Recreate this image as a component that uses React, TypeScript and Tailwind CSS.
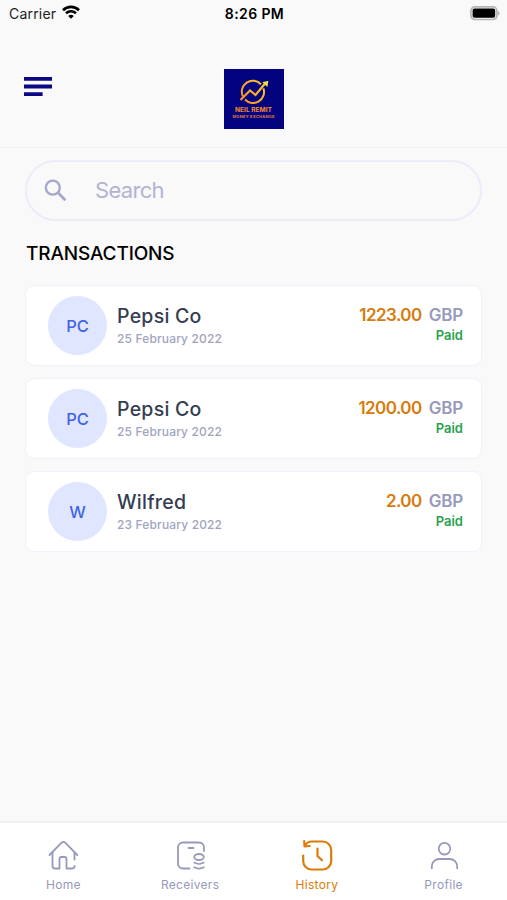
import type { ReactNode } from "react"

type Transaction = {
    id: number
    initials: string
    name: string
    date: string
    amount: string
}

const transactions: Transaction[] = [
    { id: 1, initials: "PC", name: "Pepsi Co", date: "25 February 2022", amount: "1223.00" },
    { id: 2, initials: "PC", name: "Pepsi Co", date: "25 February 2022", amount: "1200.00" },
    { id: 3, initials: "W", name: "Wilfred", date: "23 February 2022", amount: "2.00" },
]

function StatusBar() {
    return (
        <div className="grid h-7 grid-cols-3 items-center pr-[7px] pl-[9px] text-black">
            <div className="-mt-[2px] flex items-center gap-[6px]">
                <span className="text-[14px] tracking-[0.2px] text-[#222]">Carrier</span>
                <svg className="-mt-[2px]" width="18" height="14" viewBox="0 0 18 14" fill="none" stroke="currentColor" strokeWidth="2.6">
                    <path d="M1 5.2a11.4 11.4 0 0 1 16 0" />
                    <path d="M4 8.3a7.2 7.2 0 0 1 10 0" />
                    <path d="M9 13.8 6.2 11a4 4 0 0 1 5.6 0z" fill="currentColor" stroke="none" />
                </svg>
            </div>
            <span className="-mt-[2px] text-center text-[14px] font-semibold tracking-[0.4px]">8:26 PM</span>
            <svg className="-mt-[2px] justify-self-end" width="30" height="15" viewBox="0 0 30 15">
                <rect x="0.9" y="0.9" width="26" height="12.6" rx="4" fill="none" stroke="#b5b5b5" strokeWidth="1.7" />
                <rect x="2.6" y="2.6" width="22.6" height="9.2" rx="1.8" fill="#000" />
                <path d="M28.2 5v4.4c1.8-.8 1.8-3.6 0-4.4z" fill="#a5a5a5" />
            </svg>
        </div>
    )
}

function Logo() {
    return (
        <div className="flex h-[60px] w-[60px] flex-col items-center bg-[#03037f] pt-[9px]">
            <svg width="32" height="28" viewBox="0 0 32 28" fill="none">
                <defs>
                    <linearGradient id="gold" x1="0" y1="27" x2="32" y2="0" gradientUnits="userSpaceOnUse">
                        <stop offset="0" stopColor="#f58220" />
                        <stop offset="1" stopColor="#fdd835" />
                    </linearGradient>
                </defs>
                <path d="M4.9 18.5A11 11 0 0 1 23 6.4" stroke="url(#gold)" strokeWidth="2" />
                <path d="M25.4 10.3A11 11 0 0 1 7 21.5" stroke="url(#gold)" strokeWidth="2" />
                <path d="m2.5 22 9.5-9.5 5.5 4.5L27.500 5" stroke="url(#gold)" strokeWidth="2.2" />
                <path d="m24.3 4.3 6-1.6-.8 6.2z" fill="#e8e23c" />
            </svg>
            <span className="text-[6.6px] leading-[8px] font-bold whitespace-nowrap text-[#f28a30]">NEIL REMIT</span>
            <span className="text-[4px] leading-[5px] font-bold tracking-[0.25px] whitespace-nowrap text-[#e07a3a]">MONEY EXCHANGE</span>
        </div>
    )
}

function Header() {
    return (
        <header className="grid h-[120px] grid-cols-3 border-b border-[#f1f1f2] px-6 pt-[41px]">
            <button className="h-fit w-fit pt-2" aria-label="Menu">
                <svg width="28" height="20" viewBox="0 0 28 20" fill="#0c0784">
                    <path d="M0 0h28v3.8H0zM0 7.6h28v3.8H0zM0 15.2h18.6V19H0z" />
                </svg>
            </button>
            <div className="flex justify-center">
                <Logo />
            </div>
        </header>
    )
}

function SearchBar() {
    return (
        <div className="flex h-[61px] items-center rounded-full border-2 border-[#ebecfa] pl-[17px]">
            <svg width="24" height="24" viewBox="0 0 24 24" fill="none" stroke="#a6a9cc" strokeWidth="2.4">
                <circle cx="8.8" cy="8.6" r="7" />
                <path d="m13.8 13.6 7.6 7.6" strokeWidth="2.8" />
            </svg>
            <span className="ml-[27px] text-[22px] tracking-[-0.7px] text-[#b2b4d2]">Search</span>
        </div>
    )
}

function TransactionCard({ item }: { item: Transaction }) {
    return (
        <div className="flex h-[81px] items-center rounded-[9px] border border-[#f0f1fa] bg-white pr-[18px] pl-[22px]">
            <div className="flex h-[59px] w-[59px] items-center justify-center rounded-full bg-[#e0e6ff] pt-px text-[16.5px] font-medium text-[#3f62e2]">
                {item.initials}
            </div>
            <div className="ml-[10px] flex flex-col pt-[3px]">
                <span className="text-[19.5px] leading-[23px] font-medium tracking-[0.25px] text-[#343d52]">{item.name}</span>
                <span className="text-[12px] leading-[22px] font-medium tracking-[0.15px] text-[#a1a4bf]">{item.date}</span>
            </div>
            <div className="mb-[3px] ml-auto flex flex-col items-end">
                <div className="flex gap-[7px] text-[17px] leading-[22px] font-semibold tracking-[-0.2px]">
                    <span className="tracking-[-0.55px] text-[#d87b0c]">{item.amount}</span>
                    <span className="text-[#979abd]">GBP</span>
                </div>
                <span className="text-[13px] leading-[19px] font-semibold text-[#28a24c]">Paid</span>
            </div>
        </div>
    )
}

function NavIcon({ children, width = 1.8 }: { children: ReactNode; width?: number }) {
    return (
        <svg width="32" height="32" viewBox="0 0 32 32" fill="none" stroke="currentColor" strokeWidth={width} strokeLinecap="round" strokeLinejoin="round">
            {children}
        </svg>
    )
}

const navItems = [
    {
        name: "Home",
        active: false,
        icon: (
            <NavIcon>
                <path d="M2.5 16 14.6 3.7a2.5 2.5 0 0 1 3.6 0L30.3 16" />
                <path d="M5.5 13.5V27A2.5 2.5 0 0 0 8 29.5h4.5V20a2 2 0 0 1 2-2h3a2 2 0 0 1 2 2v9.5H25a2.5 2.5 0 0 0 2.5-2.5" />
                <path d="M27.5 13.5v7" />
            </NavIcon>
        ),
    },
    {
        name: "Receivers",
        active: false,
        icon: (
            <NavIcon>
                <path d="M15.5 29.5H9a5 5 0 0 1-5-5v-16a5 5 0 0 1 5-5h16a5 5 0 0 1 5 5V12" />
                <path d="M14.5 9h5" />
                <ellipse cx="25" cy="18" rx="4.8" ry="3" />
                <path d="M20.3 23.6c2.6 1.6 6.8 1.6 9.4 0" />
                <path d="M20.3 28.3c2.6 1.6 6.8 1.6 9.4 0" />
            </NavIcon>
        ),
    },
    {
        name: "History",
        active: true,
        icon: (
            <NavIcon width={2.2}>
                <path d="M2.2 16.5V22a8.5 8.5 0 0 0 8.5 8.5h11a8.5 8.5 0 0 0 8.5-8.5V11a8.5 8.5 0 0 0-8.5-8.5h-11Q6.2 2.5 4 6.5" />
                <path d="M3.2 2 3.5 7.3 8.7 7" />
                <path d="M16.5 9.5V17l4.5 4.3" />
            </NavIcon>
        ),
    },
    {
        name: "Profile",
        active: false,
        icon: (
            <NavIcon>
                <circle cx="16.5" cy="9.7" r="5.8" />
                <path d="M3.8 29.3v-1.8a7.5 7.5 0 0 1 7.5-7.5h10.4a7.5 7.5 0 0 1 7.5 7.5v1.8" />
            </NavIcon>
        ),
    },
]

function BottomNav() {
    return (
        <nav className="grid h-[79px] grid-cols-4 border-t-2 border-[#f0f0f2] bg-white pt-4">
            {navItems.map((item) => (
                <button
                    key={item.name}
                    className={`flex flex-col items-center ${item.active ? "text-[#dc7b0a]" : "text-[#9699b9]"}`}
                >
                    {item.icon}
                    <span className="mt-[5px] text-[12px] leading-[18px] tracking-[0.3px]">{item.name}</span>
                </button>
            ))}
        </nav>
    )
}

export default function App() {
    return (
        <div className="flex h-screen flex-col bg-[#f9f9fa] font-['Inter',sans-serif]">
            <StatusBar />
            <Header />
            <main className="flex-1 px-[25px] pt-3">
                <SearchBar />
                <h1 className="mt-[19px] ml-px text-[19px] leading-7 font-medium tracking-[-0.15px] text-black">TRANSACTIONS</h1>
                <div className="mt-[17px] flex flex-col gap-3">
                    {transactions.map((item) => (
                        <TransactionCard key={item.id} item={item} />
                    ))}
                </div>
            </main>
            <BottomNav />
        </div>
    )
}
